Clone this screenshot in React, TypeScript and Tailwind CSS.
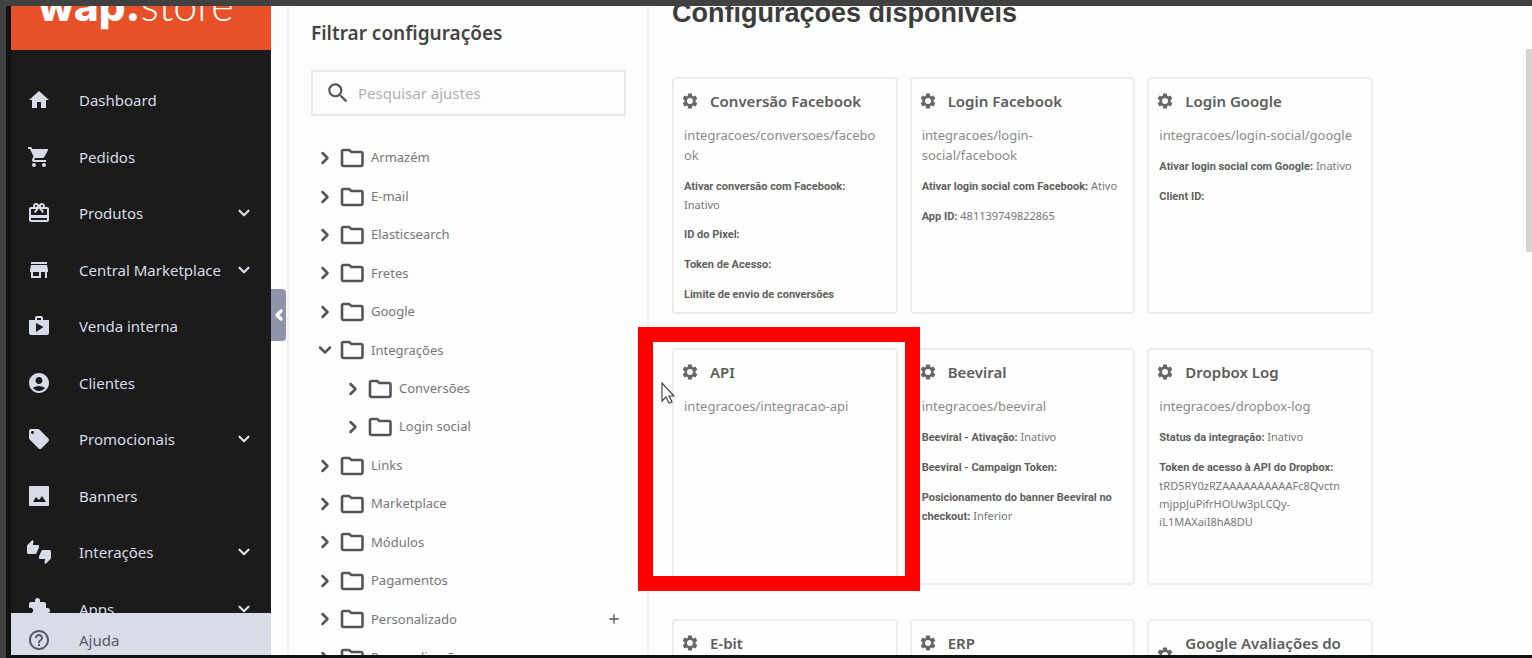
import React, { useState } from "react";
import { ChevronDown, ChevronLeft, ChevronRight } from "lucide-react";
import {
  MdAccountCircle,
  MdAdd,
  MdExtension,
  MdHelpOutline,
  MdHome,
  MdLocalOffer,
  MdRedeem,
  MdSearch,
  MdShop,
  MdShoppingCart,
  MdStore,
  MdThumbsUpDown,
} from "react-icons/md";

const BannerIcon = ({ className }: any) => (
  <svg viewBox="0 0 24 24" className={className} fill="currentColor">
    <path
      fillRule="evenodd"
      d="M3 2h18q1 0 1 1v18q0 1-1 1H3q-1 0-1-1V3q0-1 1-1zM6 18h13l-4-6-3 4-3-3z"
    />
  </svg>
);

const menu = [
  { label: "Dashboard", icon: MdHome },
  { label: "Pedidos", icon: MdShoppingCart },
  { label: "Produtos", icon: MdRedeem, more: true },
  { label: "Central Marketplace", icon: MdStore, more: true },
  { label: "Venda interna", icon: MdShop },
  { label: "Clientes", icon: MdAccountCircle },
  { label: "Promocionais", icon: MdLocalOffer, more: true },
  { label: "Banners", icon: BannerIcon },
  { label: "Interações", icon: MdThumbsUpDown, more: true },
  { label: "Apps", icon: MdExtension, more: true },
];

const folders = [
  { label: "Armazém" },
  { label: "E-mail" },
  { label: "Elasticsearch" },
  { label: "Fretes" },
  { label: "Google" },
  { label: "Integrações", open: true },
  { label: "Conversões", child: true },
  { label: "Login social", child: true },
  { label: "Links" },
  { label: "Marketplace" },
  { label: "Módulos" },
  { label: "Pagamentos" },
  { label: "Personalizado", add: true },
  { label: "Personalização" },
];

const cards = [
  {
    title: "Conversão Facebook",
    path: "integracoes/conversoes/facebo\nok",
    items: [
      ["Ativar conversão com Facebook:", "\nInativo"],
      ["ID do Pixel:", ""],
      ["Token de Acesso:", ""],
      ["Limite de envio de conversões", ""],
    ],
  },
  {
    title: "Login Facebook",
    path: "integracoes/login-\nsocial/facebook",
    items: [
      ["Ativar login social com Facebook:", "Ativo"],
      ["App ID:", "481139749822865"],
    ],
  },
  {
    title: "Login Google",
    path: "integracoes/login-social/google",
    items: [
      ["Ativar login social com Google:", "Inativo"],
      ["Client ID:", ""],
    ],
  },
  { title: "API", path: "integracoes/integracao-api", items: [], selected: true },
  {
    title: "Beeviral",
    path: "integracoes/beeviral",
    items: [
      ["Beeviral - Ativação:", "Inativo"],
      ["Beeviral - Campaign Token:", ""],
      ["Posicionamento do banner Beeviral no\ncheckout:", "Inferior"],
    ],
  },
  {
    title: "Dropbox Log",
    path: "integracoes/dropbox-log",
    items: [
      ["Status da integração:", "Inativo"],
      [
        "Token de acesso à API do Dropbox:",
        "\ntRD5RY0zRZAAAAAAAAAAFc8Qvctn\nmjppJuPifrHOUw3pLCQy-\niL1MAXaiI8hA8DU",
      ],
    ],
  },
  { title: "E-bit", path: "integracoes/ebit", items: [] },
  { title: "ERP", path: "integracoes/erp", items: [] },
  { title: "Google Avaliações do\nConsumidor", path: "integracoes/google-avaliacoes", items: [] },
];

const Gear = () => (
  <svg viewBox="0 0 24 24" className="size-[18px] shrink-0 fill-[#666]">
    <path
      fillRule="evenodd"
      d="M9.6 2h4.8l.5 3 1.6.9 2.9-1.1 2.4 4.1-2.4 1.9v2.4l2.4 1.9-2.4 4.1-2.9-1.1-1.6.9-.5 3H9.6l-.5-3-1.6-.9-2.9 1.1-2.4-4.1 2.4-1.9v-2.4L2.2 8.9l2.4-4.1 2.9 1.1 1.6-.9zM12 8a4 4 0 1 0 0 8 4 4 0 0 0 0-8z"
    />
  </svg>
);

const Folder = () => (
  <svg viewBox="0 0 24 20" className="ml-[5px] h-5 w-6 fill-none stroke-[#555]" strokeWidth={2.6}>
    <path d="M3.5 2H9l2.500 2h9.5q1.5 0 1.5 1.500v11q0 1.5-1.5 1.5h-17.500q-1.500 0-1.500-1.500v-13q0-1.500 1.500-1.500z" />
  </svg>
);

const Sidebar = () => (
  <aside className="flex w-[260px] shrink-0 flex-col bg-[#1b1b1b]">
    <header className="flex h-11 shrink-0 items-end overflow-hidden bg-[#e85127] pl-[27px]">
      <div className="flex items-baseline pb-[19px] leading-[50px] text-white">
        <span className="font-['Inter',sans-serif] text-[42px] font-extrabold">wap.</span>
        <span className="font-['Lato',sans-serif] text-[43px] font-light">store</span>
      </div>
    </header>
    <nav className="min-h-0 flex-1 overflow-hidden pt-[22px]">
      <ul className="grid h-[565px] auto-rows-fr">
        {menu.map(({ label, icon: Icon, more }) => (
          <li key={label}>
            <button className="flex h-full w-full items-center pr-[18px] pl-4 text-[#d8dce8]">
              <Icon className="size-6" />
              <span className="ml-7 flex-1 text-left text-[15px] whitespace-nowrap">{label}</span>
              {more && <ChevronDown className="size-[18px]" strokeWidth={3} />}
            </button>
          </li>
        ))}
      </ul>
    </nav>
    <button className="flex h-[42px] shrink-0 items-center bg-[#d8dce7] pt-3 pl-4 text-[#565a66]">
      <MdHelpOutline className="size-6" />
      <span className="ml-7 text-[15px]">Ajuda</span>
    </button>
  </aside>
);

const FilterPanel = () => {
  const [search, setSearch] = useState("");

  return (
    <section className="w-[362px] shrink-0 overflow-hidden border-x-2 border-[#f0f0f0] pr-[21px] pl-[22px]">
      <h2 className="mt-3 text-[19px] leading-[30px] font-semibold text-[#444]">Filtrar configurações</h2>
      <label className="mt-[22px] flex h-[46px] items-center border-2 border-[#e8e8e8] pl-3">
        <MdSearch className="size-[26px] text-[#555]" />
        <input
          type="text"
          aria-label="Pesquisar ajustes"
          placeholder="Pesquisar ajustes"
          className="ml-[7px] min-w-0 flex-1 bg-transparent text-[15px] outline-none placeholder:text-[#b0b0b0]"
          value={search}
          onChange={(e) => setSearch(e.target.value)}
        />
      </label>
      <ul className="mt-[23px] grid h-[538px] auto-rows-fr">
        {folders.map(({ label, open, child, add }) => (
          <li key={label} className={child ? "flex items-center pl-8" : "flex items-center pl-1"}>
            <button className="flex items-center text-[#555]">
              {open ? (
                <ChevronDown className="size-5" strokeWidth={3} />
              ) : (
                <ChevronRight className="size-5" strokeWidth={3} />
              )}
              <Folder />
              <span className="ml-[7px] text-[13px] text-[#777]">{label}</span>
            </button>
            {add && (
              <button aria-label="Adicionar" className="mr-1 ml-auto text-[#555]">
                <MdAdd className="size-4" />
              </button>
            )}
          </li>
        ))}
      </ul>
    </section>
  );
};

const Cursor = () => (
  <svg viewBox="0 0 14 23" className="absolute top-8 -left-[13px] z-20 h-[23px] w-[14px]">
    <path d="M1 1v18l4-4 3 6 3-1-3-6h5z" fill="#fff" stroke="#444" strokeWidth="1.2" />
  </svg>
);

const Card = ({ title, path, items, selected }: any) => (
  <article className="relative h-[237px] rounded border-2 border-[#ededed] px-[10px] pt-[10px]">
    <div className="flex items-center">
      <div className="-ml-[3px] flex">
        <Gear />
      </div>
      <h3 className="ml-[11px] text-[15px] leading-6 font-semibold whitespace-pre text-[#5c5c5c]">{title}</h3>
    </div>
    <p className="mt-3 text-[13px] leading-5 whitespace-pre text-[#8a8a8a]">{path}</p>
    <div className="mt-3 flex flex-col gap-[11px] text-[11px] leading-[18px] text-[#777]">
      {items.map(([name, value]: string[]) => (
        <p key={name} className="whitespace-pre">
          <b className="font-['Roboto',sans-serif] font-bold text-[#606060]">{name}</b>
          {value.startsWith("\n") ? value : " " + value}
        </p>
      ))}
    </div>
    {selected && (
      <>
        <div className="absolute -top-[23px] -right-6 -bottom-2 -left-9 z-10 border-[15px] border-[#f00]" />
        <Cursor />
      </>
    )}
  </article>
);

const App = () => {
  return (
    <div className="h-screen w-full overflow-hidden border-t-[6px] border-l-[6px] border-[#414141] bg-[#fdfdfd] font-['Noto_Sans',sans-serif]">
      <div className="flex h-full overflow-hidden border-b-[3px] border-l-[5px] border-[#111]">
        <Sidebar />
        <div className="flex w-4 shrink-0 items-center">
          <button aria-label="Recolher menu" className="mb-[31px] flex h-[52px] w-[15px] items-center justify-center rounded-r bg-[#9094a8] text-white">
            <ChevronLeft className="size-4 shrink-0" strokeWidth={5} />
          </button>
        </div>
        <FilterPanel />
        <main className="min-w-0 flex-1 pl-[23px]">
          <h1 className="-mt-2 font-['Liberation_Sans',sans-serif] text-[27px] leading-[30px] font-bold text-[#3c3c3c]">Configurações disponíveis</h1>
          <div className="mt-[49px] grid max-w-[701px] grid-cols-3 gap-x-3 gap-y-[34px]">
            {cards.map((card) => (
              <Card key={card.title} {...card} />
            ))}
          </div>
        </main>
        <div className="w-[6px] shrink-0 pt-[43px]">
          <div className="h-[203px] bg-[#d4d4d4]" />
        </div>
      </div>
    </div>
  );
};

export default App;
